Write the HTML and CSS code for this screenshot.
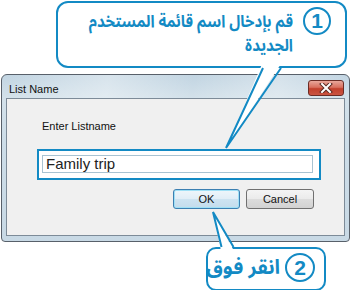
FILE: index.html
```html
<!DOCTYPE html>
<html lang="ar">
<head>
<meta charset="utf-8">
<title>List Name</title>
<link rel="stylesheet" href="styles.css">
</head>
<body>
<div class="stage">
  <div class="window" dir="ltr">
    <div class="titlebar">
      <span class="title">List Name</span>
      <div class="close">
        <svg width="14" height="10" viewBox="0 0 14 10">
          <path d="M3 1 L11 9 M11 1 L3 9" stroke="#5a2a24" stroke-width="4" stroke-linecap="square"/>
          <path d="M3 1 L11 9 M11 1 L3 9" stroke="#ffffff" stroke-width="2" stroke-linecap="square"/>
        </svg>
      </div>
    </div>
    <div class="panel">
      <div class="prompt">Enter Listname</div>
      <div class="highlight">
        <div class="field">Family trip</div>
      </div>
      <div class="buttons">
        <div class="btn ok">OK</div>
        <div class="btn">Cancel</div>
      </div>
    </div>
  </div>

  <div class="callout c1" dir="rtl">
    <div class="num">1</div>
    <div class="msg"><span class="line">قم بإدخال اسم قائمة المستخدم</span><span class="line">الجديدة</span></div>
  </div>
  <div class="callout c2" dir="rtl">
    <div class="num">2</div>
    <div class="msg"><span class="line">انقر فوق</span></div>
  </div>

  <svg class="tails" width="351" height="290" viewBox="0 0 351 290">
    <polygon points="262.5,63 226,148 281.5,63" fill="#ffffff"/>
    <polyline points="263,68 226,148 281,68" fill="none" stroke="#138ac4" stroke-width="2" stroke-linejoin="miter"/>
    <polygon points="221,251 213,212 234,251" fill="#ffffff"/>
    <polyline points="221.5,247 213,212 233.5,247" fill="none" stroke="#138ac4" stroke-width="2" stroke-linejoin="miter"/>
  </svg>
</div>
</body>
</html>
```

FILE: styles.css
```css
html, body {
  margin: 0;
  padding: 0;
  background: #ffffff;
}

.stage {
  position: relative;
  width: 351px;
  height: 290px;
  overflow: hidden;
  padding-top: 74px;
  box-sizing: border-box;
}

.window {
  margin-left: 1px;
  width: 349px;
  height: 168px;
  box-sizing: border-box;
  border: 1px solid #58606a;
  border-radius: 6px 6px 4px 4px;
  background: linear-gradient(180deg, #c2d5e2 0%, #d3e1ea 14%, #cddde8 40%, #c8d9e5 100%);
  padding: 0 4px 5px 4px;
  display: flex;
  flex-direction: column;
  font-family: "Liberation Sans", Arial, sans-serif;
}

.titlebar {
  height: 23px;
  display: flex;
  align-items: center;
  justify-content: space-between;
  background: linear-gradient(100deg, rgba(255,255,255,0) 0%, rgba(255,255,255,0.35) 30%, rgba(255,255,255,0) 55%, rgba(255,255,255,0.3) 80%, rgba(255,255,255,0) 100%);
}

.title {
  font-size: 11px;
  color: #111111;
  padding-left: 3px;
  padding-top: 4px;
}

.close {
  width: 36px;
  height: 16px;
  box-sizing: border-box;
  margin-top: 2px;
  margin-right: 1px;
  border: 1px solid #6b2c25;
  border-radius: 3px;
  background: linear-gradient(180deg, #e9a79b 0%, #d8705f 45%, #c2402c 55%, #c95442 100%);
  display: flex;
  align-items: center;
  justify-content: center;
}

.close svg {
  display: block;
}

.panel {
  flex: 1;
  border: 1px solid #7d8b98;
  background: #f0f0f0;
  display: flex;
  flex-direction: column;
}

.prompt {
  font-size: 11px;
  color: #111111;
  margin-top: 21px;
  margin-left: 35px;
  line-height: 13px;
}

.highlight {
  margin-top: 16px;
  margin-left: 30px;
  width: 284px;
  height: 31px;
  box-sizing: border-box;
  border: 2px solid #138ac4;
  background: #ffffff;
  padding: 4px 6px 5px 3px;
}

.field {
  height: 18px;
  box-sizing: border-box;
  border: 1px solid #a9c3d2;
  background: #ffffff;
  font-size: 15px;
  line-height: 16px;
  color: #222222;
  padding-left: 3px;
}

.buttons {
  display: flex;
  justify-content: flex-end;
  gap: 6px;
  margin-top: 9px;
  margin-right: 30px;
}

.btn {
  width: 68px;
  height: 20px;
  box-sizing: border-box;
  border: 1px solid #707070;
  border-radius: 3px;
  background: linear-gradient(180deg, #f4f4f4 0%, #ebebeb 48%, #dcdcdc 52%, #d2d2d2 100%);
  font-size: 11px;
  color: #111111;
  display: flex;
  align-items: center;
  justify-content: center;
}

.btn.ok {
  width: 67px;
  border-color: #3c7fb1;
  background: linear-gradient(180deg, #eef6fb 0%, #e1eef7 48%, #cde3f1 52%, #c4dcec 100%);
  box-shadow: inset 0 0 0 1px #9fe0f6;
}

.callout {
  position: absolute;
  box-sizing: border-box;
  border: 2px solid #138ac4;
  background: #ffffff;
  display: flex;
  align-items: flex-start;
  color: #138ac4;
  font-family: "Noto Sans Arabic", "DejaVu Sans Condensed", "DejaVu Sans", sans-serif;
  font-weight: bold;
}

.c1 {
  left: 56px;
  top: 1px;
  width: 291px;
  height: 67px;
  border-radius: 12px;
  padding: 4px 14px 0 0;
  gap: 10px;
}

.c2 {
  left: 206px;
  top: 247px;
  width: 120px;
  height: 44px;
  border-radius: 10px;
  padding: 4px 9px 0 0;
  gap: 5px;
}

.num {
  flex: none;
  width: 28px;
  height: 28px;
  box-sizing: border-box;
  border: 2px solid #138ac4;
  border-radius: 50%;
  display: flex;
  align-items: center;
  justify-content: center;
  font-family: "Liberation Sans", Arial, sans-serif;
  font-size: 21px;
  font-weight: bold;
  color: #138ac4;
}

.c2 .num {
  width: 30px;
  height: 29px;
}

.msg {
  display: flex;
  flex-direction: column;
  align-items: flex-start;
  white-space: nowrap;
}

.c1 .msg {
  font-size: 17px;
  line-height: 24px;
  margin-top: 3px;
  transform: scaleX(0.88);
  transform-origin: right center;
}

.c2 .msg {
  font-size: 20px;
  line-height: 28px;
  margin-top: 1px;
}

.tails {
  position: absolute;
  left: 0;
  top: 0;
  pointer-events: none;
}
```
